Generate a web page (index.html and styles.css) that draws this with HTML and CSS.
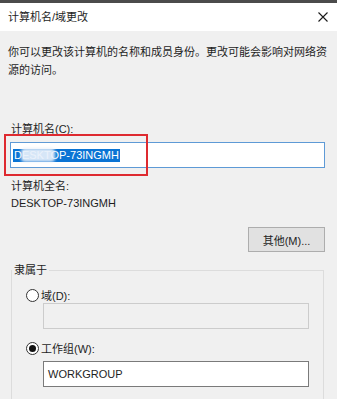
FILE: index.html
```html
<!DOCTYPE html>
<html lang="zh-CN">
<head>
<meta charset="utf-8">
<title>计算机名/域更改</title>
<link rel="stylesheet" href="styles.css">
</head>
<body>
<div class="window">
  <div class="topbar"></div>
  <div class="titlebar">
    <span class="title">计算机名/域更改</span>
    <svg class="close" width="10" height="10" viewBox="0 0 10 10"><path d="M0.5 0.5L9.5 9.5M9.5 0.5L0.5 9.5" stroke="#1a1a1a" stroke-width="1.1" fill="none"/></svg>
  </div>
  <div class="content">
    <p class="desc">你可以更改该计算机的名称和成员身份。更改可能会影响对网络资源的访问。</p>
    <div class="label label-c">计算机名(C):</div>
    <div class="field-wrap">
      <div class="textbox focused"><span class="sel">DESKTOP-73INGMH</span><span class="blur"></span></div>
      <div class="annot"></div>
    </div>
    <div class="label label-full">计算机全名:</div>
    <div class="value">DESKTOP-73INGMH</div>
    <div class="btn-row"><div class="btn">其他(M)...</div></div>
    <fieldset class="group">
      <legend>隶属于</legend>
      <div class="radio-row r1"><span class="radio"></span><span>域(D):</span></div>
      <div class="textbox disabled indent"></div>
      <div class="radio-row r2"><span class="radio checked"></span><span>工作组(W):</span></div>
      <div class="textbox plain indent">WORKGROUP</div>
    </fieldset>
  </div>
</div>
</body>
</html>
```
FILE: styles.css
```css
* { box-sizing: border-box; }
html, body { margin: 0; padding: 0; }
body {
  width: 337px;
  height: 399px;
  overflow: hidden;
  background: #f0f0f0;
  font-family: "Liberation Sans", "Noto Sans CJK SC", sans-serif;
  font-size: 11px;
  color: #1e1e1e;
}
.topbar { height: 3px; background: #4b4b4b; }
.titlebar {
  height: 28px;
  background: #fff;
  display: flex;
  align-items: center;
  justify-content: space-between;
  padding: 0 9px 0 8px;
}
.title { font-size: 11px; line-height: 14px; color: #1e1e1e; }
.close { display: block; }
.content { padding: 0 12px 0 11px; }
.desc {
  margin: 12px 0 0 -3px;
  line-height: 18px;
  width: 320px;
}
.label, .value { line-height: 16px; }
.label-c { margin-top: 42px; }
.field-wrap { position: relative; margin-top: 5px; margin-left: -1px; }
.textbox {
  height: 26px;
  border: 1px solid #7a7a7a;
  background: #fff;
  display: flex;
  align-items: center;
  padding-left: 3px;
  position: relative;
}
.textbox.focused { border-color: #5e9ad6; padding-left: 2px; width: 315px; }
.sel {
  background: #0a74d4;
  color: #fff;
  line-height: 13px;
  padding: 0 1px;
}
.blur {
  position: absolute;
  left: 10px;
  top: 5px;
  width: 34px;
  height: 14px;
  background: rgba(232, 240, 250, 0.92);
  filter: blur(1.5px);
  border-radius: 4px;
}
.annot {
  position: absolute;
  left: -6px;
  top: -8px;
  width: 144px;
  height: 42px;
  border: 2px solid #de2a30;
}
.label-full { margin-top: 10px; line-height: 17px; }
.value { line-height: 17px; }
.btn-row { display: flex; justify-content: flex-end; margin-top: 15px; }
.btn {
  width: 77px;
  height: 25px;
  background: #e1e1e1;
  border: 1px solid #adadad;
  display: flex;
  align-items: center;
  justify-content: center;
}
.group {
  margin: 11px 1px 0 0;
  padding: 0 0 20px 14px;
  border: 1px solid #dcdcdc;
  min-width: 0;
}
.group legend {
  padding: 0 2px;
  margin-left: -14px;
  line-height: 14px;
}
.radio-row {
  display: flex;
  align-items: center;
  gap: 2px;
  height: 16px;
}
.r1 { margin-top: 10px; }
.r2 { margin-top: 11px; }
.radio {
  width: 13px;
  height: 13px;
  border-radius: 50%;
  border: 1px solid #333;
  background: #fff;
  display: flex;
  align-items: center;
  justify-content: center;
}
.radio.checked::after {
  content: "";
  width: 7px;
  height: 7px;
  border-radius: 50%;
  background: #111;
}
.indent { margin-left: 17px; width: 266px; }
.textbox.disabled { background: #f0f0f0; border-color: #cccccc; margin-top: 0; }
.r1 + .textbox { margin-top: 0; }
.textbox.plain { margin-top: 5px; padding-left: 4px; }
.r1 { margin-bottom: 0; }
```
